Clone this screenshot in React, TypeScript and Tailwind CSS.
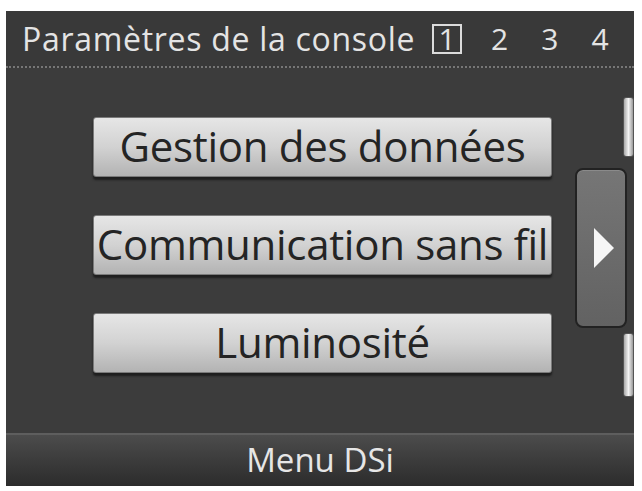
import { } from 'react';

const font = { fontFamily: '"Open Sans", "DejaVu Sans", sans-serif' };

function MenuButton({ label }: { label: string }) {
  return (
    <div className="h-[60px] w-[459px] rounded-[3px] border border-[#7a7a7a] bg-gradient-to-b from-[#e6e6e6] via-[#d2d2d2] to-[#b3b3b3] shadow-[0_3px_2px_#1e1e1e] flex items-center justify-center">
      <span className="text-[42px] leading-none text-[#242424] tracking-[-0.3px] whitespace-nowrap pb-[2px]">{label}</span>
    </div>
  );
}

function Rail() {
  return <div className="w-[11px] rounded-[3px] bg-gradient-to-r from-[#a9a9a9] via-[#f4f4f4] to-[#9a9a9a] border border-[#555]" />;
}

export default function App() {
  return (
    <div className="w-[642px] h-[491px] bg-white pl-[6px] pr-[8px] pt-[11px] pb-[5px]" style={font}>
      <div className="h-full flex flex-col bg-[#3c3c3c]">
        {/* header */}
        <div className="h-[57px] flex items-center pl-[16px] pr-[20px] border-b-2 border-dotted border-[#777] bg-[#393939]">
          <span className="text-[32px] font-medium leading-none text-[#e4e4e4] tracking-[0.7px]">Paramètres de la console</span>
          <div className="ml-[17px] w-[30px] h-[30px] border-2 border-[#dcdcdc] flex items-center justify-center text-[30px] font-medium leading-none text-[#e4e4e4]">1</div>
          <span className="ml-[29px] text-[30px] font-medium leading-none text-[#e4e4e4]">2</span>
          <span className="ml-[33px] text-[30px] font-medium leading-none text-[#e4e4e4]">3</span>
          <span className="ml-[33px] text-[30px] font-medium leading-none text-[#e4e4e4]">4</span>
        </div>

        {/* content */}
        <div className="flex-1 flex">
          <div className="pl-[87px] pt-[49px] flex flex-col gap-[38px]">
            <MenuButton label="Gestion des données" />
            <MenuButton label="Communication sans fil" />
            <MenuButton label="Luminosité" />
          </div>
          <div className="ml-auto flex flex-col items-end pt-[29px]">
            <div className="h-[60px] flex"><Rail /></div>
            <div className="mt-[11px] mr-[7px] w-[52px] h-[160px] rounded-[8px] border-2 border-[#222] bg-gradient-to-b from-[#767676] to-[#626262] flex items-center justify-center shadow-[inset_0_1px_0_#8a8a8a]">
              <svg width="24" height="44" viewBox="0 0 24 44" className="ml-[6px]">
                <polygon points="2,2 22,22 2,42" fill="#f6f6f6" />
              </svg>
            </div>
            <div className="mt-[5px] h-[64px] flex"><Rail /></div>
          </div>
        </div>

        {/* footer */}
        <div className="h-[53px] flex items-center justify-center border-t-2 border-[#5e5e5e] bg-gradient-to-b from-[#4c4c4c] to-[#2c2c2c]">
          <span className="text-[33px] font-medium leading-none text-[#e6e6e6] pb-[2px]">Menu DSi</span>
        </div>
      </div>
    </div>
  );
}
